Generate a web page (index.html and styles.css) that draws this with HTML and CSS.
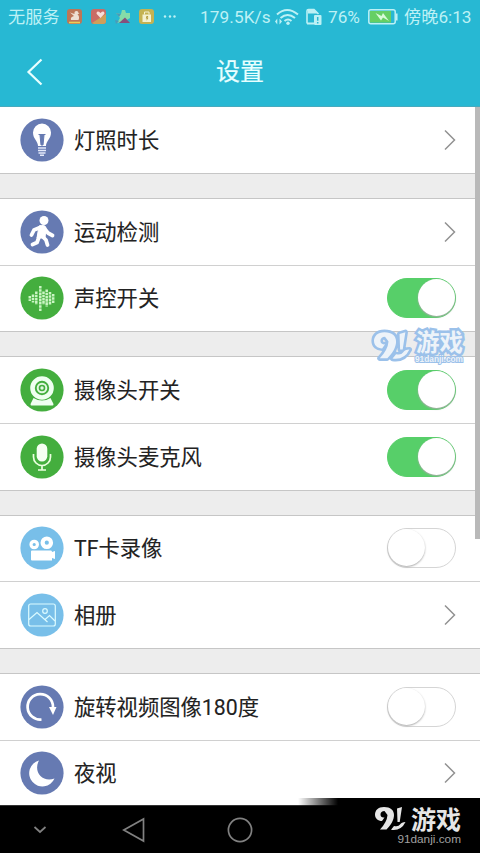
FILE: index.html
```html
<!DOCTYPE html>
<html lang="zh-CN">
<head>
<meta charset="utf-8">
<title>设置</title>
<link rel="stylesheet" href="styles.css">
</head>
<body>
<div class="screen">
  <header class="header">
    <div class="status">
      <span class="carrier">无服务</span>
      <svg class="notifs" width="108" height="18" viewBox="0 0 108 18">
        <rect x="1" y="1" width="15" height="15" rx="3" fill="#bd7657"/>
        <path d="M3 14.500h11" stroke="#e9cf57" stroke-width="1.600"/>
        <path d="M5 12q-1-3 3-4L4 4.500 8.500 6q-.5-3 2-3 2 0 2 2l1 .5-2 .8Q14 9 12.500 12z" fill="#eee0d2"/>
        <rect x="25" y="1" width="15" height="15" rx="3" fill="#c96c66"/>
        <path d="M26 15L40 6v7q0 3-3 3h-9z" fill="#cf9f5a"/>
        <path d="M34.500 10l-4-4.300q0-3 2.500-2l1.500 1.200L36 3.700q2.500-1 2.500 2z" fill="#f6ded9"/>
        <path d="M50 5l5 1 1-4 3 0 1 3 4 0v5l-5 3-8 2 3-5z" fill="#86dda9"/>
        <path d="M53 15l6-5.500 5 5.500z" fill="#86507c"/><path d="M49 12l4 1-3 3zM50 5l5 1-2 3z" fill="#4a9ab8"/>
        <rect x="73" y="1" width="15" height="15" rx="3" fill="#c4b252"/>
        <path d="M76.500 6.500h8.500V14h-8.500z" fill="#f4f1cf"/><path d="M78.500 6.500V4h4.500v2.500" fill="none" stroke="#f4f1cf"/><path d="M80.500 8l1.800 0-.8 1.800 1 0-2 3 .3-2.300-1 0z" fill="#b49a3c"/>
        <g fill="#bdf1f5"><circle cx="99" cy="8.500" r="1.200"/><circle cx="104" cy="8.500" r="1.200"/></g>
      </svg>
      <svg class="more" width="6" height="18" viewBox="0 0 6 18"><circle cx="1.500" cy="8.500" r="1.200" fill="#bdf1f5"/></svg>
      <span class="speed">179.5K/s</span>
      <svg class="wifi" width="24" height="18" viewBox="0 0 24 18">
        <g fill="none" stroke="#bdf1f5" stroke-width="2"><path d="M2 6.500q10-9 21 0M5.500 10q7-6 14.500 0M9.500 13q3.500-3 7 0"/></g>
        <circle cx="13" cy="15.200" r="1.700" fill="#bdf1f5"/>
        <path d="M0 13.500l2.300-3v6zM7 13.500l-2.500-3v6z" fill="#bdf1f5"/>
      </svg>
      <svg class="sim" width="16" height="18" viewBox="0 0 16 18">
        <path d="M1 15.500V3q0-1.500 1.500-1.500H8L12.500 6" fill="none" stroke="#bdf1f5" stroke-width="1.600"/><path d="M2 1.500h6l4 4H2zM1 14.500h7v2H1z" fill="#bdf1f5"/>
        <rect x="8" y="7" width="7.500" height="10" rx="1" fill="#bdf1f5"/><path d="M11.700 9v3.800M11.700 14v1.500" stroke="#27b8d3" stroke-width="1.500"/>
      </svg>
      <span class="percent">76%</span>
      <svg class="battery" width="30" height="16" viewBox="0 0 30 16">
        <rect x=".8" y=".8" width="26.400" height="14" rx="2" fill="none" stroke="#bdf1f5" stroke-width="1.500"/>
        <rect x="2" y="2" width="21" height="11.600" fill="#66cf64"/><path d="M28.700 4.500v7" stroke="#bdf1f5" stroke-width="1.700"/>
        <path d="M7.500 4l6 3 1.500-3 6 8-6-3.500-2 3z" fill="#d9fbd9"/>
      </svg>
      <span class="time">傍晚6:13</span>
    </div>
    <div class="bar">
      <svg class="back" width="18" height="28" viewBox="0 0 18 28"><path d="M15.500 1.500L2.500 14l13 12.500" fill="none" stroke="#e8ffff" stroke-width="2.200"/></svg>
      <h1 class="title">设置</h1>
    </div>
  </header>

  <main class="list">
    <section class="group first">
      <div class="row">
        <svg class="icon" viewBox="0 0 44 44"><circle cx="22" cy="22" r="21.600" fill="#667ab2"/>
          <path d="M18 28c0-5-5-7-5-13.500a9 9 0 0 1 18 0C31 21 26 23 26 28z" fill="#fff"/>
          <path d="M18.500 16.500h7M20 17l1 10h2l1-10" fill="#667ab2" stroke="#667ab2"/>
          <path d="M18 30h8M18 32.500h8M18.500 35h7M20 37.300h4" stroke="#e4e9fa" stroke-width="1.500"/></svg>
        <span class="label">灯照时长</span>
        <svg class="chev" viewBox="0 0 12 22"><path d="M1 1.500L10.500 11 1 20.500"/></svg>
      </div>
    </section>

    <section class="group">
      <div class="row">
        <svg class="icon" viewBox="0 0 44 44"><circle cx="22" cy="22" r="21.600" fill="#667ab2"/>
          <circle cx="24" cy="10.500" r="4.500" fill="#fff"/>
          <path d="M20 17.500L14 20 11.500 25M24 18l4 5 4.500 2.500M19 27l-2 5.500-4.500 2M23 27l3 3 1.500 5" fill="none" stroke="#fff" stroke-width="3.800" stroke-linecap="round" stroke-linejoin="round"/>
          <path d="M19 16q6-2 7 2l-1 10h-8z" fill="#fff" stroke="#fff" stroke-linejoin="round"/></svg>
        <span class="label">运动检测</span>
        <svg class="chev" viewBox="0 0 12 22"><path d="M1 1.500L10.500 11 1 20.500"/></svg>
      </div>
      <div class="row">
        <svg class="icon" viewBox="0 0 44 44"><circle cx="22" cy="22" r="21.600" fill="#44ae3e"/>
          <g stroke="#caf5c3" stroke-width="2.500" stroke-dasharray="2.600 .6"><path d="M9.800 20v5M13 18.500v8M16.300 15.500v13M20.300 10v25M23.500 15.500v13M26.700 13.500v17M30 16v13M33.200 18v9"/></g></svg>
        <span class="label">声控开关</span>
        <span class="switch on"></span>
      </div>
    </section>

    <section class="group">
      <div class="row">
        <svg class="icon" viewBox="0 0 44 44"><circle cx="22" cy="22" r="21.600" fill="#44ae3e"/>
          <circle cx="22" cy="20" r="9.500" fill="none" stroke="#effff0" stroke-width="4.600"/>
          <circle cx="22" cy="20" r="4.300" fill="none" stroke="#e2f8e1" stroke-width="2"/><circle cx="22" cy="20" r="1.700" fill="#e2f8e1"/>
          <path d="M13.500 30q8.500 5 17 0l3 6q0 1.500-1 1.500h-21q-1 0-1-1.500z" fill="#effff0"/></svg>
        <span class="label">摄像头开关</span>
        <span class="switch on"></span>
      </div>
      <div class="row">
        <svg class="icon" viewBox="0 0 44 44"><circle cx="22" cy="22" r="21.600" fill="#44ae3e"/>
          <rect x="16.700" y="8.500" width="10.600" height="18" rx="5.300" fill="#f5fff2"/>
          <path d="M13.500 19v3a8.500 8.500 0 0 0 17 0v-3M22 31v4M18 35h8" fill="none" stroke="#eaffdf" stroke-width="1.700"/></svg>
        <span class="label">摄像头麦克风</span>
        <span class="switch on"></span>
      </div>
    </section>

    <section class="group">
      <div class="row">
        <svg class="icon" viewBox="0 0 44 44"><circle cx="22" cy="22" r="21.600" fill="#78bfe9"/>
          <g fill="#78bfe9" stroke="#fff"><circle cx="14.200" cy="18.500" r="3.200" stroke-width="3.200"/><circle cx="26.800" cy="16.700" r="4.200" stroke-width="4.200"/></g>
          <path d="M12 24.500h19q1 0 1 1.500l3-1v8l-3-1v2.500H12q-1 0-1-1v-8q0-1 1-1z" fill="#fff"/></svg>
        <span class="label">TF卡录像</span>
        <span class="switch"></span>
      </div>
      <div class="row">
        <svg class="icon" viewBox="0 0 44 44"><circle cx="22" cy="22" r="21.600" fill="#78bfe9"/>
          <g fill="none" stroke="#dcfbff" stroke-width="1.200"><rect x="8.700" y="11" width="26.600" height="22" rx="2"/><circle cx="25" cy="18" r="2.300"/><path d="M9 26.500l8-7 10.500 9.500M24.500 27l5-4.500 5.500 5.500"/></g></svg>
        <span class="label">相册</span>
        <svg class="chev" viewBox="0 0 12 22"><path d="M1 1.500L10.500 11 1 20.500"/></svg>
      </div>
    </section>

    <section class="group last">
      <div class="row">
        <svg class="icon" viewBox="0 0 44 44"><circle cx="22" cy="22" r="21.600" fill="#667ab2"/>
          <path d="M21.500 34.500A12.700 12.700 0 1 1 33 22" fill="none" stroke="#fff" stroke-width="2.700"/>
          <path d="M29 22h7.500l-3.500 8z" fill="#fff"/></svg>
        <span class="label">旋转视频图像180度</span>
        <span class="switch"></span>
      </div>
      <div class="row">
        <svg class="icon" viewBox="0 0 44 44"><circle cx="22" cy="22" r="21.600" fill="#667ab2"/>
          <path d="M19 9.500A13.200 13.200 0 1 0 34.500 27.500C22 32 13 20 19 9.500z" fill="#fff"/></svg>
        <span class="label">夜视</span>
        <svg class="chev" viewBox="0 0 12 22"><path d="M1 1.500L10.500 11 1 20.500"/></svg>
      </div>
    </section>
    <div class="scrollbar"></div>
  </main>

  <nav class="nav">
    <svg class="nav-down" width="14" height="8" viewBox="0 0 14 8"><path d="M1.500 1L7 6l5.500-5"/></svg>
    <svg class="nav-back" width="24" height="26" viewBox="0 0 24 26"><path d="M21.500 2v22L1.800 13z"/></svg>
    <svg class="nav-home" width="26" height="26" viewBox="0 0 26 26"><circle cx="13" cy="13" r="11.600"/></svg>
  </nav>

  <div class="mark blue">
    <svg class="nine" viewBox="0 0 31 25"><path d="M9 1C3 1 0 4.500 0 8.500S3 15 7 15l2.500-3.500C7 12 5.500 10.500 5.500 8.500S7 5 9.500 5t3 4q-.5 7-7.500 14.500h6.500C16 19 19 14 19 9S15.500 1 9 1zM22 2.500l5-1.500-2.300 15h-2.200zM30.500 16q-4 0-5.500 2.500T19 20l-3 3.800q10 1.500 14.500-7.800z"/></svg>
    <div class="words"><b>游戏</b><small>91danji.com</small></div>
  </div>
  <div class="fade"></div>
  <div class="mark plain">
    <svg class="nine" viewBox="0 0 31 25"><path d="M9 1C3 1 0 4.500 0 8.500S3 15 7 15l2.500-3.500C7 12 5.500 10.500 5.500 8.500S7 5 9.500 5t3 4q-.5 7-7.500 14.500h6.500C16 19 19 14 19 9S15.500 1 9 1zM22 2.500l5-1.500-2.300 15h-2.200zM30.500 16q-4 0-5.500 2.500T19 20l-3 3.800q10 1.500 14.500-7.800z"/></svg>
    <div class="words"><b>游戏</b><small>91danji.com</small></div>
  </div>
</div>
</body>
</html>
```
FILE: styles.css
```css
* { box-sizing: border-box; }
body { margin: 0; font-family: Roboto, "Noto Sans CJK SC", sans-serif; }
.screen { position: relative; width: 480px; height: 853px; overflow: hidden; background: #ededed; display: flex; flex-direction: column; }
svg { display: block; flex: none; }
.header { height: 107px; flex: none; background: #27b8d3; border-bottom: 1px solid #48aabd; }
.status { height: 34px; display: flex; align-items: center; padding-left: 8px; color: #bdf1f5; font-size: 17.2px; line-height: 34px; white-space: nowrap; }
.status span { flex: none; }
.carrier { width: 58px; }
.notifs { width: 108px; }
.more { margin-left: -1px; }
.speed { margin-left: 21px; width: 73px; letter-spacing: .1px; }
.wifi { margin-left: 2px; }
.sim { margin-left: 7px; }
.percent { margin-left: 6px; width: 35px; }
.battery { margin-left: 5px; }
.time { margin-left: 6px; }
.bar { height: 72px; display: grid; grid-template-columns: 70px 1fr 70px; align-items: center; }
.back { margin: 4px 0 0 26px; }
.title { margin: 0 0 1px; text-align: center; color: #e8ffff; font-size: 24px; font-weight: 400; -webkit-text-stroke: .2px; }
.list { position: relative; height: 698px; flex: none; display: flex; flex-direction: column; gap: 24px; overflow: hidden; }
.group { border-top: 1px solid #c6c6c6; border-bottom: 1px solid #c6c6c6; background: #fff; height: 134.300px; flex: none; display: flex; flex-direction: column; }
.group.first { height: 67px; border-top: 0; }
.row { flex: 1; display: flex; align-items: center; padding: 0 24px 0 19.500px; }
.row + .row { border-top: 1px solid #d0d0d0; }
.icon { width: 44px; height: 44px; }
.label { margin-left: 10.500px; padding-top: 2px; flex: 1; font-size: 21.300px; color: #222; line-height: 32px; white-space: nowrap; -webkit-text-stroke: .1px; }
.chev { width: 12px; height: 22px; fill: none; stroke: #929292; stroke-width: 1.500; }
.switch { width: 69px; height: 40px; border-radius: 20px; border: 1.500px solid #d5d5d5; background: #fff; display: flex; }
.switch::before { content: ""; width: 37px; height: 37px; border-radius: 50%; background: #fff; box-shadow: 0 1px 2px #aaa; }
.switch.on { border-color: #57cf69; background: #57cf69; justify-content: flex-end; }
.scrollbar { position: absolute; right: 0; top: 0; width: 5px; height: 432px; background: #b9b9b9; }
.nav { height: 48px; flex: none; background: #000; border-top: 1px solid #333; display: flex; align-items: center; }
.nav svg { fill: none; stroke: #818181; stroke-width: 1.700; }
.nav-down { margin-left: 33px; }
.nav-back { margin-left: 75px; }
.nav-home { margin-left: 81px; }
.fade { position: absolute; left: 298px; top: 798px; width: 182px; height: 10px; background: linear-gradient(90deg, transparent, #000 40px); }
.mark { position: absolute; display: flex; }
.nine { width: 31px; height: 25px; fill: currentColor; }
.words { display: flex; flex-direction: column; align-items: flex-end; white-space: nowrap; }
.words b { font-family: "Noto Sans CJK SC", sans-serif; font-weight: 700; font-size: 25px; line-height: 25px; height: 25px; }
.words small { font-family: "Liberation Sans", sans-serif; font-size: 11.800px; line-height: 13px; }
.blue { left: 374px; top: 329px; gap: 5px; color: #edf3f9; -webkit-text-stroke: 5px #9bc1ea; paint-order: stroke; }
.blue .nine { width: 36px; height: 33px; overflow: visible; stroke: #9bc1ea; stroke-width: 4.500px; stroke-linejoin: round; }
.blue .words b { font-size: 23.500px; line-height: 24px; height: 24px; }
.blue .words small { font-size: 8.300px; font-weight: 700; line-height: 10px; padding-top: 1px; -webkit-text-stroke: 2px #9bc1ea; }
.plain { left: 375px; top: 806px; color: #e6e6e6; }
.plain .words { width: 55px; }
.plain .words small { color: #a0a0a0; padding-top: 2px; }
```
